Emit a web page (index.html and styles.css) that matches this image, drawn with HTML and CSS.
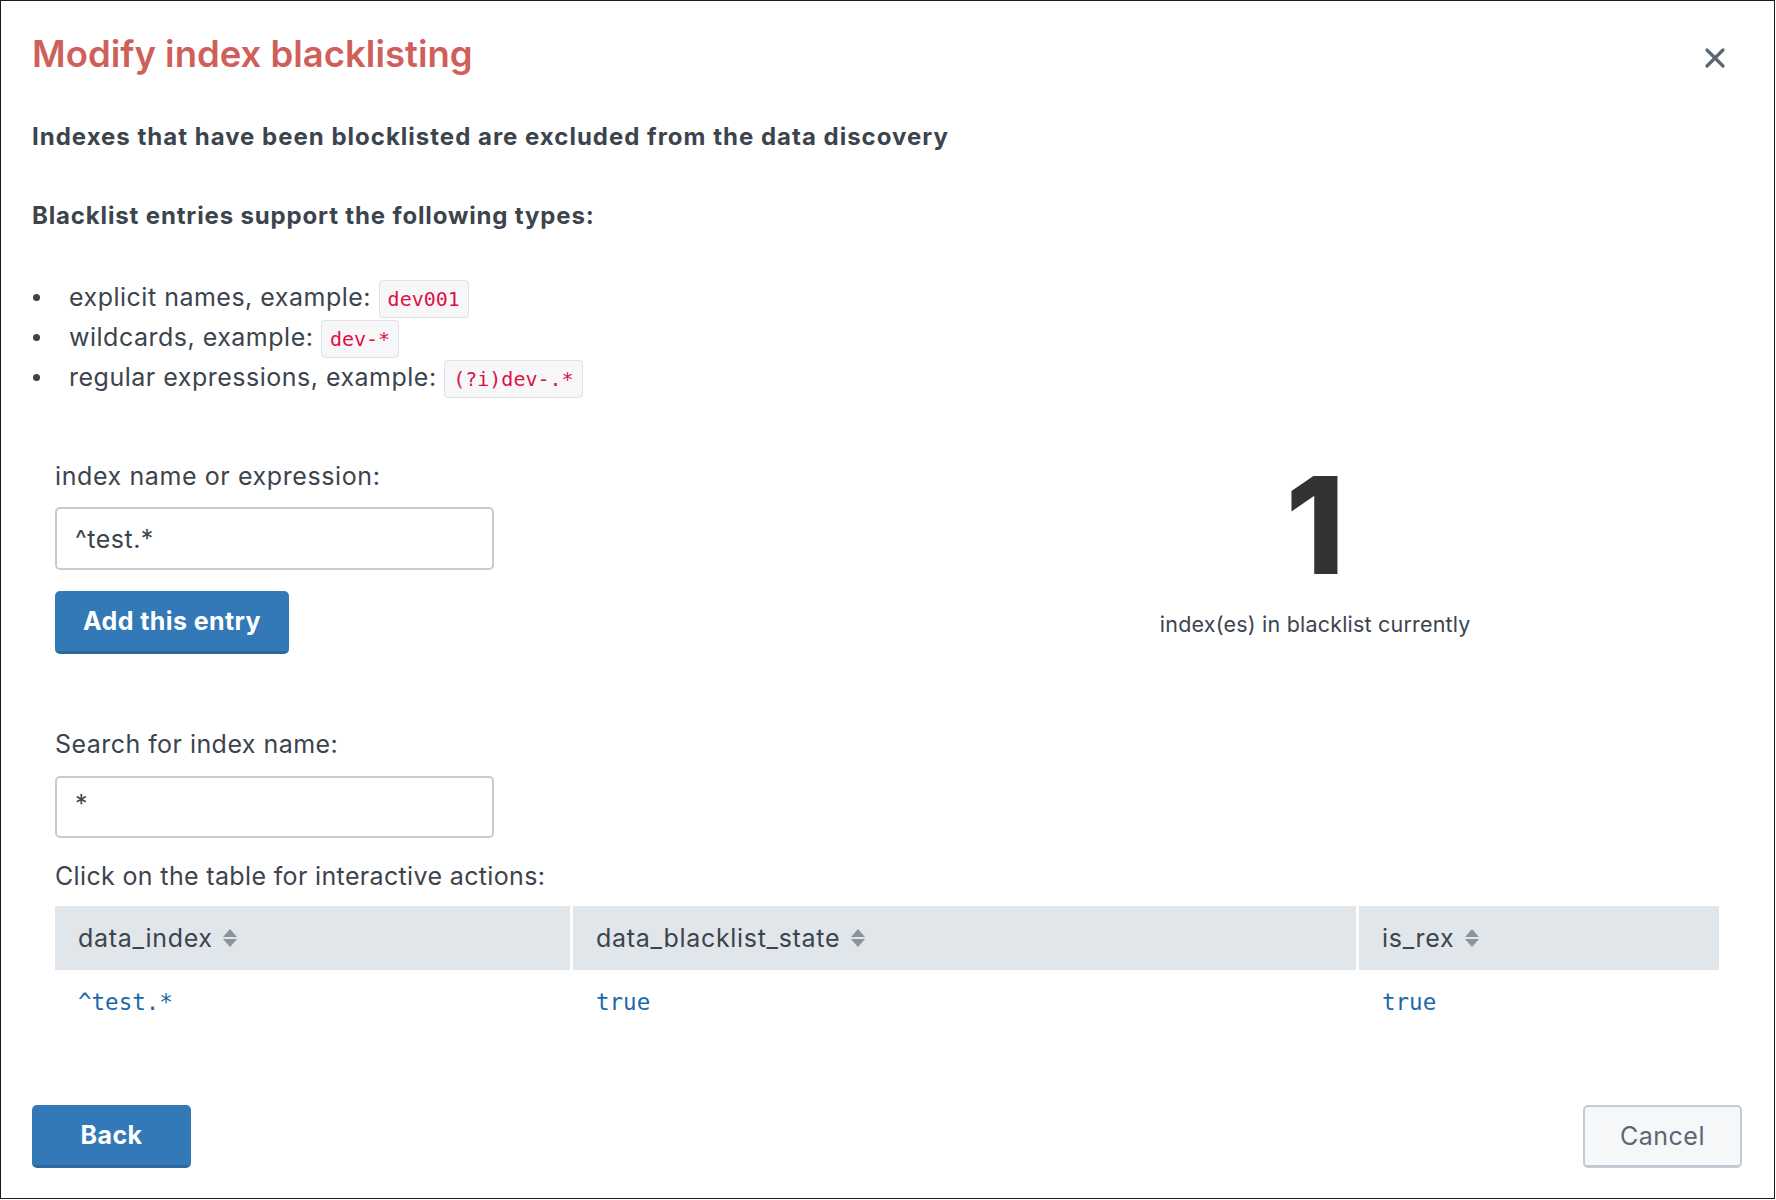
FILE: index.html
```html
<!DOCTYPE html>
<html>
<head>
<meta charset="utf-8">
<link rel="stylesheet" href="styles.css">
</head>
<body>
<div class="modal">
  <header class="modal-header">
    <h1 class="modal-title">Modify index blacklisting</h1>
    <button class="close" aria-label="Close">
      <svg width="22" height="22" viewBox="0 0 22 22"><path d="M3 3 L19 19 M19 3 L3 19" stroke="#5c6773" stroke-width="3.2" stroke-linecap="round" fill="none"/></svg>
    </button>
  </header>
  <div class="modal-body">
    <p class="lead lead-first">Indexes that have been blocklisted are excluded from the data discovery</p>
    <p class="lead lead-second">Blacklist entries support the following types:</p>
    <ul class="types">
      <li>explicit names, example: <code>dev001</code></li>
      <li>wildcards, example: <code>dev-*</code></li>
      <li>regular expressions, example: <code>(?i)dev-.*</code></li>
    </ul>
    <div class="panel-row">
      <div class="form-col">
        <label class="field-label">index name or expression:</label>
        <input class="text-input" type="text" value="^test.*">
        <button class="btn btn-primary btn-add">Add this entry</button>
      </div>
      <div class="stat-col">
        <div class="stat-value">1</div>
        <div class="stat-caption">index(es) in blacklist currently</div>
      </div>
    </div>
    <div class="search-panel">
      <label class="field-label search-label">Search for index name:</label>
      <input class="text-input search-input" type="text" value="*">
      <div class="field-label table-hint">Click on the table for interactive actions:</div>
      <table class="results">
        <thead>
          <tr>
            <th class="col-a">data_index <span class="sort"></span></th>
            <th class="col-b">data_blacklist_state <span class="sort"></span></th>
            <th class="col-c">is_rex <span class="sort"></span></th>
          </tr>
        </thead>
        <tbody>
          <tr>
            <td>^test.*</td>
            <td>true</td>
            <td>true</td>
          </tr>
        </tbody>
      </table>
    </div>
  </div>
  <footer class="modal-footer">
    <button class="btn btn-primary btn-back">Back</button>
    <button class="btn btn-default btn-cancel">Cancel</button>
  </footer>
</div>
</body>
</html>
```
FILE: styles.css
```css
* { box-sizing: border-box; }
html, body { margin: 0; padding: 0; background: #fff; }
body {
  font-family: "Inter", "Liberation Sans", sans-serif;
  color: #3c444d;
}
.modal {
  width: 1775px;
  height: 1199px;
  border: 1px solid #1b1b1b;
  display: flex;
  flex-direction: column;
  background: #fff;
}
.modal-header {
  display: flex;
  justify-content: space-between;
  align-items: flex-start;
  padding: 27px 48px 0 31px;
}
.modal-title {
  margin: 0;
  font-size: 36.5px;
  line-height: 52px;
  font-weight: 600;
  color: #cf5f5b;
}
.close {
  border: 0;
  background: none;
  padding: 0;
  margin-top: 19px;
  width: 22px;
  height: 22px;
  cursor: pointer;
}
.close svg { display: block; }
.modal-body {
  padding: 0 31px;
  flex: 1;
}
.lead {
  margin: 0;
  font-size: 24px;
  font-weight: 700;
  line-height: 30px;
  color: #3c444d;
}
.lead-first { margin-top: 42px; letter-spacing: 1px; }
.lead-second { margin-top: 49px; letter-spacing: 0.85px; }
.types {
  margin: 46px 0 0;
  padding: 0 0 0 1px;
  list-style: none;
  font-size: 25px;
  letter-spacing: 0.5px;
  line-height: 40px;
}
.types li::before {
  content: "";
  display: inline-block;
  width: 7px;
  height: 7px;
  border-radius: 50%;
  background: #3c444d;
  margin-right: 29px;
  vertical-align: middle;
  position: relative;
  top: -2px;
}
code {
  font-family: "DejaVu Sans Mono", monospace;
  font-size: 20px;
  line-height: 20px;
  letter-spacing: 0;
  color: #dd1144;
  background: #f7f7f9;
  border: 1px solid #e1e1e8;
  border-radius: 4px;
  padding: 6px 8px;
}
.panel-row {
  display: grid;
  grid-template-columns: 1fr 1fr;
  margin-top: 64px;
}
.form-col {
  padding: 0 23px;
  display: flex;
  flex-direction: column;
  align-items: flex-start;
}
.field-label {
  font-size: 25px;
  letter-spacing: 0.6px;
  line-height: 30px;
  color: #3c444d;
  display: block;
}
.text-input {
  margin-top: 16px;
  width: 439px;
  height: 63px;
  border: 2px solid #c3cbd4;
  border-radius: 5px;
  padding: 0 18px 0;
  font-family: "Inter", "Liberation Sans", sans-serif;
  font-size: 25px;
  letter-spacing: 0.5px;
  color: #3c444d;
  background: #fff;
}
.btn {
  font-family: "Inter", "Liberation Sans", sans-serif;
  border-radius: 5px;
  cursor: pointer;
}
.btn-primary {
  background: #3379b7;
  color: #fff;
  border: 0;
  border-bottom: 3px solid #2b68a0;
  font-weight: 700;
  font-size: 25px;
  letter-spacing: 0.4px;
}
.btn-add {
  margin-top: 21px;
  width: 234px;
  height: 63px;
}
.stat-col {
  display: flex;
  flex-direction: column;
  align-items: center;
}
.stat-value {
  font-size: 135px;
  line-height: 140px;
  font-weight: 800;
  color: #333;
  margin-top: -6px;
}
.stat-caption {
  font-size: 21.5px;
  letter-spacing: 0.2px;
  line-height: 28px;
  margin-top: 15px;
  color: #3c444d;
}
.search-panel {
  margin-top: 75px;
  padding: 0 24px 0 23px;
}
.search-label { letter-spacing: 0.45px; }
.search-input {
  margin-top: 17px;
  height: 62px;
  padding-bottom: 6px;
}
.table-hint { margin-top: 23px; letter-spacing: 0.35px; }
.results {
  margin-top: 15px;
  width: 100%;
  border-collapse: separate;
  border-spacing: 0;
}
.results th {
  background: #e1e6eb;
  height: 64px;
  text-align: left;
  font-weight: 400;
  font-size: 25px;
  letter-spacing: 0.7px;
  padding: 0 0 0 23px;
  color: #3c444d;
  border-left: 3px solid #fff;
}
.results th:first-child { border-left: 0; }
.results .col-a { width: 515px; }
.results .col-b { width: 786px; }
.sort {
  display: inline-block;
  vertical-align: middle;
  width: 14px;
  height: 20px;
  margin-left: 3px;
  position: relative;
  top: -2px;
}
.sort::before, .sort::after {
  content: "";
  position: absolute;
  left: 0;
  border-left: 7px solid transparent;
  border-right: 7px solid transparent;
}
.sort::before { top: 1px; border-bottom: 8px solid #8b939b; }
.sort::after { bottom: 1px; border-top: 8px solid #8b939b; }
.results td {
  font-family: "DejaVu Sans Mono", monospace;
  font-size: 22.5px;
  color: #1a6aab;
  padding: 0 0 0 23px;
  height: 64px;
  border-left: 3px solid transparent;
}
.results td:first-child { border-left: 0; }
.modal-footer {
  display: flex;
  justify-content: space-between;
  padding: 0 32px 30px 31px;
}
.btn-back {
  width: 159px;
  height: 63px;
}
.btn-default {
  background: #f5f7f9;
  color: #5c6773;
  border: 2px solid #c3cbd4;
  border-bottom-width: 3px;
  font-size: 25px;
  letter-spacing: 0.5px;
}
.btn-cancel {
  width: 159px;
  height: 63px;
}
```
